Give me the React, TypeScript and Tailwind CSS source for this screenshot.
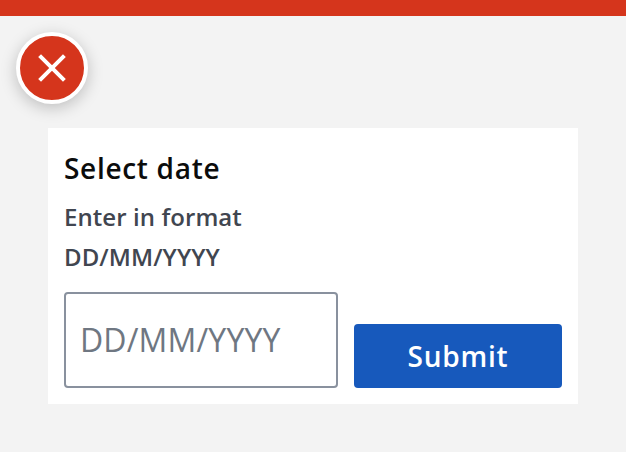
export default function App() {
  return (
    <div className="flex h-[452px] w-[626px] flex-col overflow-hidden bg-[#f3f3f3] font-['Open_Sans','Noto_Sans',sans-serif] antialiased">
      <div className="h-4 shrink-0 bg-[#d5351c]" />
      <div className="mt-4 ml-4 flex size-[72px] shrink-0 items-center justify-center rounded-full border-4 border-white bg-[#d5351c] shadow-[0_4px_16px_rgba(0,0,0,0.22)]">
        <svg width="28" height="28" viewBox="0 0 28 28" fill="none" stroke="white" strokeWidth="4">
          <path d="M1.6 1.6 26.4 26.4M26.4 1.6 1.6 26.4" />
        </svg>
      </div>
      <form className="mt-6 ml-12 flex h-[276px] w-[530px] flex-col bg-white p-4" onSubmit={(e) => e.preventDefault()}>
        <h1 className="mt-1 text-[28px] leading-10 font-[560] tracking-[0.7px] text-[#0b0c0c]">Select date</h1>
        <label htmlFor="date" className="mt-[9px] w-[274px] text-[24px] leading-10 font-[560] tracking-[0.08px] text-[#414650]">
          Enter in format<br />DD/MM/YYYY
        </label>
        <div className="mt-auto flex items-end gap-4">
          <input id="date" placeholder="DD/MM/YYYY" className="h-24 w-[274px] rounded-[4px] border-2 border-[#89919e] px-[14px] pb-[2px] text-[32px] tracking-[0.15px] text-[#414650] placeholder:text-[#6f7782] placeholder:opacity-100" />
          <button className="h-16 w-[208px] rounded-[4px] bg-[#1759bc] text-[28px] font-[560] tracking-[0.8px] text-white">Submit</button>
        </div>
      </form>
    </div>
  );
}
